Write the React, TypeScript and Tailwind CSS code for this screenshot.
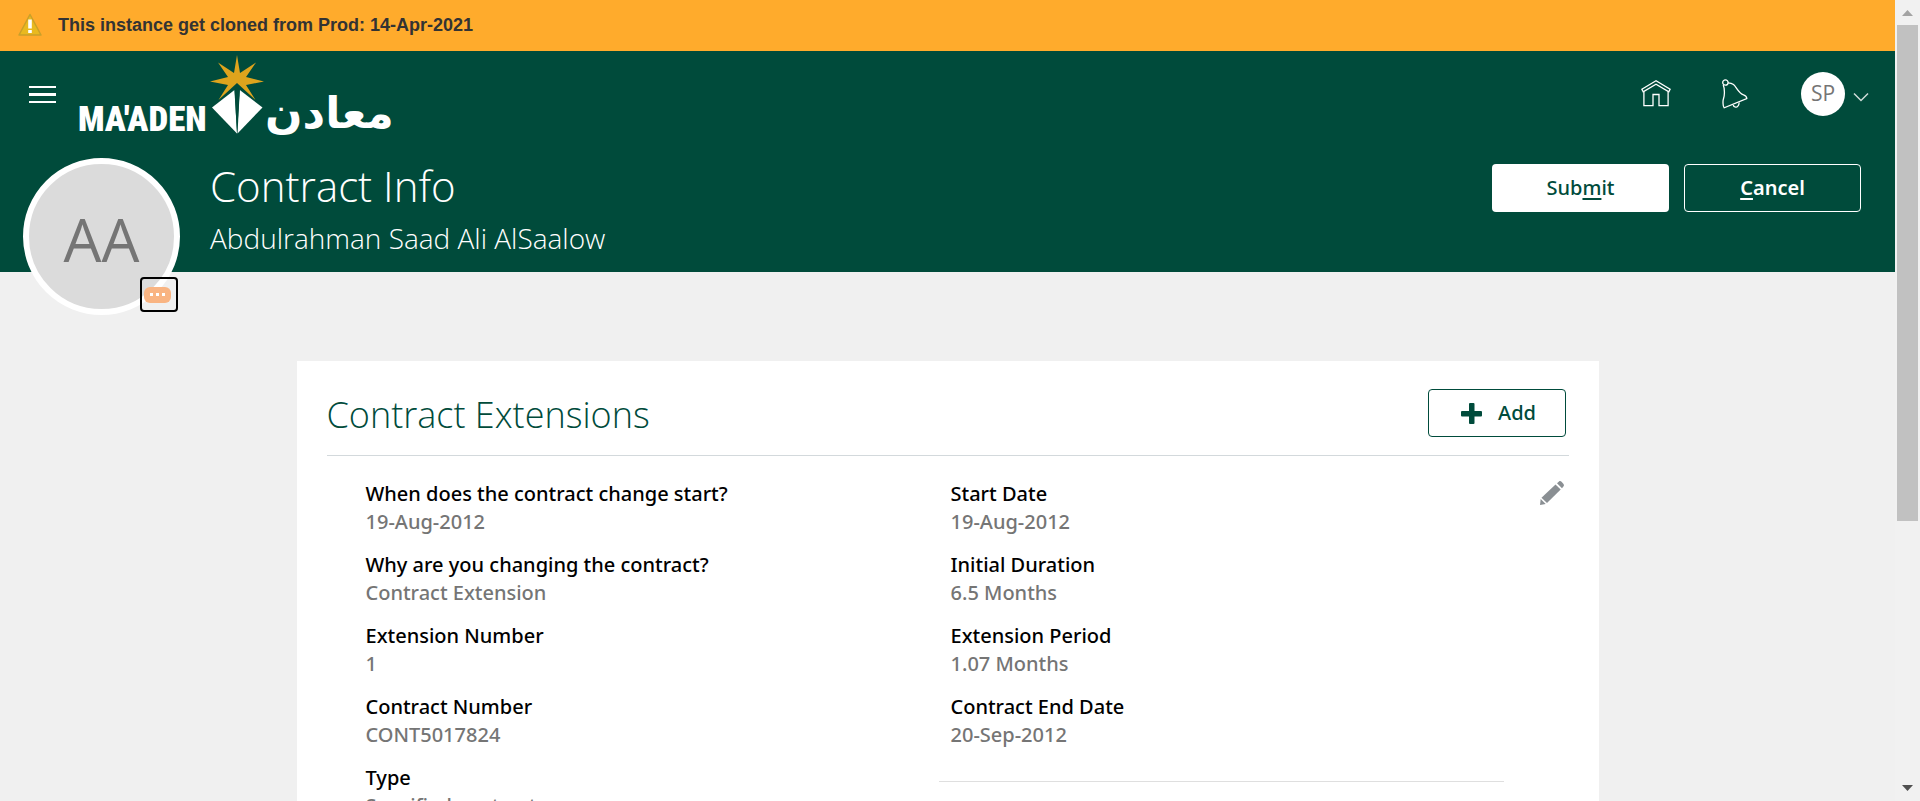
import React from "react";

type Field = { label: string; value: string };

const leftFields: Field[] = [
  { label: "When does the contract change start?", value: "19-Aug-2012" },
  { label: "Why are you changing the contract?", value: "Contract Extension" },
  { label: "Extension Number", value: "1" },
  { label: "Contract Number", value: "CONT5017824" },
  { label: "Type", value: "Specified contract" },
];

const rightFields: Field[] = [
  { label: "Start Date", value: "19-Aug-2012" },
  { label: "Initial Duration", value: "6.5 Months" },
  { label: "Extension Period", value: "1.07 Months" },
  { label: "Contract End Date", value: "20-Sep-2012" },
];

function WarningIcon() {
  return (
    <svg className="h-6 w-6" viewBox="0 0 24 24" aria-hidden="true">
      <path d="M12 1.5 L23 22 H1 Z" fill="#e9b91f" stroke="#c9a02a" strokeWidth="1.5" strokeLinejoin="round" />
      <path d="M12 6.5 V15.5" stroke="#fff" strokeWidth="3.6" />
      <rect x="10.2" y="17" width="3.6" height="3" fill="#fff" />
    </svg>
  );
}

function Logo() {
  return (
    <svg className="h-[86px] w-[330px]" viewBox="0 0 330 86" role="img" aria-label="Ma'aden">
      <g transform="translate(-77 -51)">
        <text x="78" y="131" fontFamily="'Roboto Condensed', Roboto, sans-serif" fontWeight="900" fontSize="35" fill="#fff">
          MA'ADEN
        </text>
        <path
          d="M237 55 L240 73 L256 62.500 L246 77 L264 81.500 L246 85 L255.500 100 L237 83 L218.500 100 L228 85 L210 81.500 L228 77 L218 62.500 L234 73 Z"
          fill="#dea41d"
        />
        <path d="M234.500 90 L212 107.500 L237 133.500 Z" fill="#fff" />
        <path d="M239.800 90 L262.500 107.500 L237.500 133.500 Z" fill="#fff" />
        <path d="M234.500 90 L237 133 L239.800 90 L237 86 Z" fill="#004b3b" />
        <text x="265" y="128" fontFamily="'DejaVu Sans', sans-serif" fontWeight="700" fontSize="44" fill="#fff">
          معادن
        </text>
      </g>
    </svg>
  );
}

function HomeIcon() {
  return (
    <svg className="h-[30px] w-[30px]" viewBox="0 0 30 30" fill="none" stroke="#fff" strokeWidth="1.3" aria-hidden="true">
      <path d="M15 1.800 L0.900 10.300 L2.200 12.800 L15 5.200 L27.800 12.800 L29.100 10.300 Z" />
      <path d="M2.900 12.600 V26.700 H12 V15.500 H18 V26.700 H27.100 V12.600" />
    </svg>
  );
}

function BellIcon() {
  return (
    <svg className="h-[30px] w-[28px]" viewBox="0 0 28 30" fill="none" stroke="#fff" strokeWidth="1.3" aria-hidden="true">
      <circle cx="4.400" cy="3.500" r="2.700" />
      <path d="M2.200 6 C3.600 9 3.400 11 3.400 14 C3.400 19 1.800 20 2 23 C2.100 25 1.800 27 3.200 28.800 L25.800 19.500 C25.800 17.500 24.500 16.500 22.500 15.800 C17.500 14.200 15.500 8 12.500 5.500 C10.800 4.100 8.800 3.800 7 3.800" />
      <path d="M12.200 26 C13 29 17.500 29.500 18.200 23.500" />
    </svg>
  );
}

function FieldList({ fields }: { fields: Field[] }) {
  return (
    <dl className="flex flex-col gap-[15px] font-['Noto_Sans',sans-serif] text-xl leading-7 font-medium">
      {fields.map((f) => (
        <div key={f.label}>
          <dt className="text-black">{f.label}</dt>
          <dd className="text-[#757575]">{f.value}</dd>
        </div>
      ))}
    </dl>
  );
}

export default function App() {
  return (
    <div className="flex h-screen overflow-hidden bg-[#f0f0f0] font-['Open_Sans',sans-serif]">
      <div className="flex min-w-0 flex-1 flex-col">
        <div className="flex h-[51px] shrink-0 items-center gap-4 bg-[#ffab2c] pb-[2px] pl-[18px] font-['Liberation_Sans',sans-serif] text-lg font-bold text-[#333]">
          <WarningIcon />
          <p>This instance get cloned from Prod: 14-Apr-2021</p>
        </div>

        <header className="flex h-[221px] shrink-0 flex-col bg-[#004b3b] text-white">
          <div className="flex h-[86px] shrink-0 items-center justify-between pr-[26px] pl-[29px]">
            <div className="flex items-center gap-[21px]">
              <button type="button" aria-label="Menu" className="flex w-[27px] flex-col gap-[5px]">
                <span className="h-[2px] bg-white" />
                <span className="h-[3px] bg-white" />
                <span className="h-[2px] bg-white" />
              </button>
              <Logo />
            </div>
            <div className="flex items-center">
              <a href="#home" aria-label="Home" className="mr-[50px]">
                <HomeIcon />
              </a>
              <button type="button" aria-label="Notifications" className="mr-[52px]">
                <BellIcon />
              </button>
              <button type="button" aria-label="Settings" className="flex items-center gap-2">
                <span className="flex h-11 w-11 items-center justify-center rounded-full bg-white text-[21px] text-[#757575]">SP</span>
                <svg className="h-4 w-4" viewBox="0 0 16 16" fill="none" stroke="#cfdcd8" strokeWidth="1.5" aria-hidden="true">
                  <path d="M1 7.500 L8 14.500 L15 7.500" />
                </svg>
              </button>
            </div>
          </div>

          <div className="flex shrink-0 items-start pr-[34px] pl-[23px]">
            <div className="relative mt-[21px] flex h-[157px] w-[157px] shrink-0 items-center justify-center rounded-full border-[6px] border-white bg-[#dbdbdb] pt-1 text-6xl text-[#757575]">
              AA
              <button
                type="button"
                aria-label="More actions"
                className="absolute right-[-4px] bottom-[-3px] flex h-[35px] w-[38px] items-center rounded-sm border-2 border-black pl-[2px]"
              >
                <span className="flex h-4 w-[27px] items-center justify-center gap-[3px] rounded-[6px] bg-[#f9b482]">
                  <span className="h-[3px] w-[3px] bg-white" />
                  <span className="h-[3px] w-[3px] bg-white" />
                  <span className="h-[3px] w-[3px] bg-white" />
                </span>
              </button>
            </div>
            <div className="mt-[18px] ml-[30px] flex-1 font-light">
              <h1 className="text-[42px] leading-[62px]">Contract Info</h1>
              <p className="text-[28px] leading-[42px]">Abdulrahman Saad Ali AlSaalow</p>
            </div>
            <div className="mt-[27px] flex gap-[15px] font-['Noto_Sans',sans-serif] text-xl">
              <button type="button" className="h-12 w-[177px] rounded-sm bg-white font-medium text-[#004b3b]">
                Sub<span className="underline underline-offset-3">m</span>it
              </button>
              <button type="button" className="h-12 w-[177px] rounded-sm border border-white font-semibold">
                <span className="underline underline-offset-3">C</span>ancel
              </button>
            </div>
          </div>
        </header>

        <main className="min-h-0 flex-1 overflow-hidden px-10 pt-[89px]">
          <section className="mx-auto max-w-[1302px] bg-white px-[30px] pt-7 pb-10">
            <div className="flex h-[67px] items-start justify-between border-b border-[#d3d9dc] pr-[3px]">
              <h2 className="text-4xl leading-[52px] font-light text-[#004b3b]">Contract Extensions</h2>
              <button
                type="button"
                className="flex h-12 w-[138px] items-center justify-center gap-4 rounded-sm border border-[#004b3b] pl-1 font-['Noto_Sans',sans-serif] text-xl font-medium text-[#004b3b]"
              >
                <svg className="h-[21px] w-[21px]" viewBox="0 0 21 21" fill="#004b3b" aria-hidden="true">
                  <rect x="8" width="5.500" height="21" rx="1" />
                  <rect y="8" width="21" height="5.500" rx="1" />
                </svg>
                Add
              </button>
            </div>
            <div className="flex items-start pt-6 pl-[39px]">
              <div className="grid flex-1 grid-cols-2 items-start gap-2">
                <FieldList fields={leftFields} />
                <div className="border-b border-[#dfdfdf] pb-8 pl-3">
                  <FieldList fields={rightFields} />
                </div>
              </div>
              <button type="button" aria-label="Edit" className="mt-[1px] mr-[5px] ml-9">
                <svg className="h-6 w-6" viewBox="0 0 24 24" fill="#8a8f93" aria-hidden="true">
                  <path d="M1.500 16.800 L15.500 3.500 L20.700 8.500 L7 22 Z" />
                  <path d="M17 2.200 L19 0.400 C20 -0.200 21 0.200 22 1.200 L23.500 3 C24.200 4 24 4.800 23.400 5.500 L22 7.200 Z" />
                  <path d="M0.700 18 L5.700 23 L0 24 Z" />
                </svg>
              </button>
            </div>
          </section>
        </main>
      </div>

      <div className="flex w-[25px] shrink-0 flex-col items-center bg-[#f1f1f1]" aria-hidden="true">
        <svg className="h-[25px] w-[25px] shrink-0" viewBox="0 0 25 25">
          <path d="M12.500 10 L18 16 H7 Z" fill="#a3a3a3" />
        </svg>
        <div className="flex w-[21px] flex-1 flex-col">
          <div className="h-[66%] bg-[#c1c1c1]" />
        </div>
        <svg className="h-[25px] w-[25px] shrink-0" viewBox="0 0 25 25">
          <path d="M12.500 15 L18 9 H7 Z" fill="#505050" />
        </svg>
      </div>
    </div>
  );
}
